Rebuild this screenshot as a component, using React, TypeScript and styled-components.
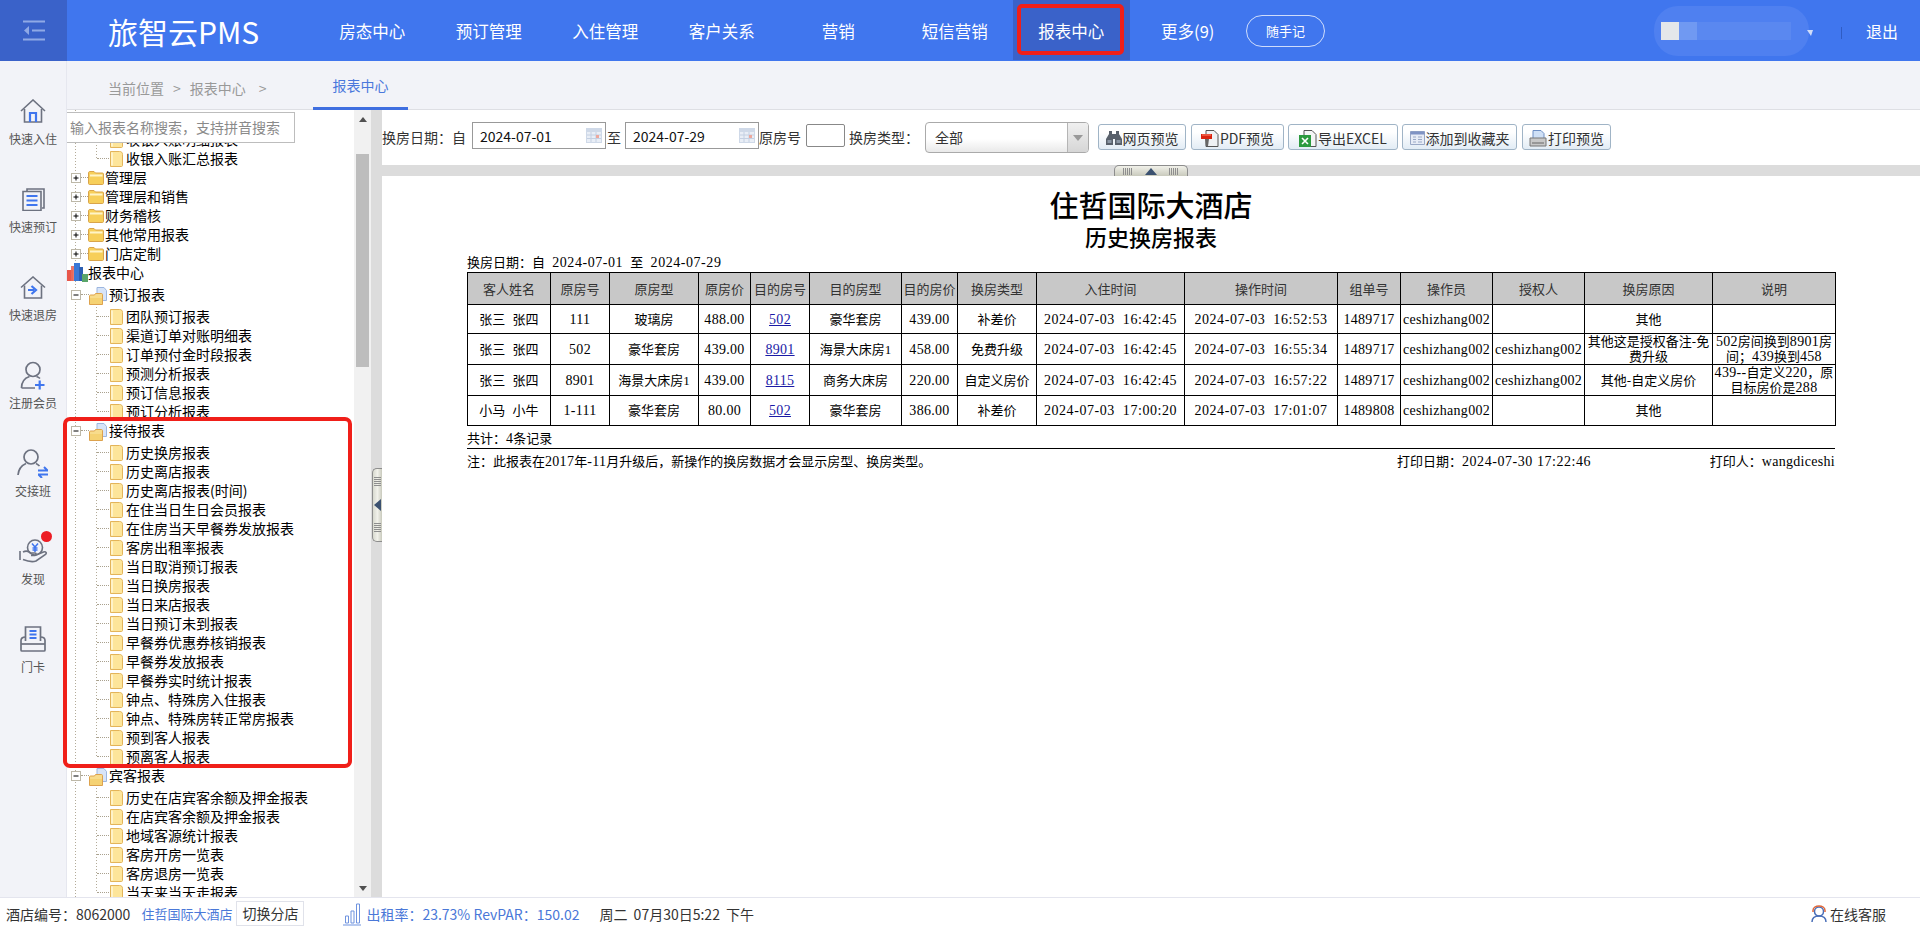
import React from 'react';
import styled, { createGlobalStyle } from 'styled-components';

const SANS = '"Noto Sans CJK SC", "Noto Sans", sans-serif';
const PRINT = '"Liberation Serif", "Noto Sans CJK SC", serif';
const BLUE = '#4076ee';
const DARK_BLUE = '#3a62c9';
const RED = '#f01f19';

const navItems = ['房态中心', '预订管理', '入住管理', '客户关系', '营销', '短信营销', '报表中心', '更多(9)'];

const reportRows = [
  { id: 1, guest: '张三 张四', from: '111', fromType: '玻璃房', price: '488.00', to: '502', toType: '豪华套房', toPrice: '439.00', kind: '补差价', checkin: '2024-07-03 16:42:45', done: '2024-07-03 16:52:53', group: '1489717', auth: '', reason: '其他', note: null, height: 29 },
  { id: 2, guest: '张三 张四', from: '502', fromType: '豪华套房', price: '439.00', to: '8901', toType: '海景大床房1', toPrice: '458.00', kind: '免费升级', checkin: '2024-07-03 16:42:45', done: '2024-07-03 16:55:34', group: '1489717', auth: 'ceshizhang002', reason: '其他这是授权备注-免费升级', note: 'a', height: 31 },
  { id: 3, guest: '张三 张四', from: '8901', fromType: '海景大床房1', price: '439.00', to: '8115', toType: '商务大床房', toPrice: '220.00', kind: '自定义房价', checkin: '2024-07-03 16:42:45', done: '2024-07-03 16:57:22', group: '1489717', auth: 'ceshizhang002', reason: '其他-自定义房价', note: 'b', height: 31 },
  { id: 4, guest: '小马 小牛', from: '1-111', fromType: '豪华套房', price: '80.00', to: '502', toType: '豪华套房', toPrice: '386.00', kind: '补差价', checkin: '2024-07-03 17:00:20', done: '2024-07-03 17:01:07', group: '1489808', auth: '', reason: '其他', note: null, height: 30 },
];

const columns = [83, 59, 89, 52, 59, 92, 56, 79, 148, 153, 63, 92, 92, 128, 123];
const heads = ['客人姓名', '原房号', '原房型', '原房价', '目的房号', '目的房型', '目的房价', '换房类型', '入住时间', '操作时间', '组单号', '操作员', '授权人', '换房原因', '说明'];

const App = () => (
  <>
    <GlobalStyle />
    <Page>
      <Header>
        <Toggle>
          <svg width="24" height="21" viewBox="0 0 24 21" fill="none" stroke="#8fa9e6" strokeWidth="2">
            <path d="M1 1.5h22M10 10.5h13M1 19.5h22" />
            <path d="M7 6l-5 4.5 5 4.5z" fill="#8fa9e6" stroke="none" />
          </svg>
        </Toggle>
        <Logo>旅智云PMS</Logo>
        <Nav>
          {navItems.map(item => (
            <NavItem key={item} $active={item === '报表中心'}>
              {item}
              {item === '报表中心' && <NavMark />}
            </NavItem>
          ))}
        </Nav>
        <NoteButton>随手记</NoteButton>
        <HeaderRight>
          <UserBlur>
            <BlurBand>
              <BlurCell $color="#e4e7ea" />
              <BlurCell $color="#7099f2" />
              <BlurCell $color="#5a88f0" $wide />
            </BlurBand>
          </UserBlur>
          <UserCaret />
          <HeaderDivider />
          <Logout>退出</Logout>
        </HeaderRight>
      </Header>

      <Main>
        <SideNav>
          <SideItem>
            <SideIcon>
              <svg width="26" height="24" viewBox="0 0 26 24" fill="none" stroke="#6d7280" strokeWidth="1.6">
                <path d="M1 12L13 1l12 11" />
                <path d="M4.5 10v13h17V10" />
                <path d="M10 23v-9h6v9" stroke={BLUE} strokeWidth="2.2" />
              </svg>
            </SideIcon>
            <SideLabel>快速入住</SideLabel>
          </SideItem>
          <SideItem>
            <SideIcon>
              <svg width="23" height="23" viewBox="0 0 23 23" fill="none" stroke="#6d7280" strokeWidth="1.6">
                <path d="M5 3V1h17v19h-2" />
                <path d="M1 3.5h18v19H1z" />
                <path d="M4.5 8h11M4.5 12.500h11M4.500 17h11" stroke={BLUE} strokeWidth="2" />
              </svg>
            </SideIcon>
            <SideLabel>快速预订</SideLabel>
          </SideItem>
          <SideItem>
            <SideIcon>
              <svg width="26" height="23" viewBox="0 0 26 23" fill="none" stroke="#6d7280" strokeWidth="1.6">
                <path d="M1 11.500L13 1l12 10.500" />
                <path d="M4.500 9.500V22h17V9.500" />
                <path d="M8 14h6M11.500 10l4.500 4-4.500 4" stroke={BLUE} strokeWidth="2.200" />
              </svg>
            </SideIcon>
            <SideLabel>快速退房</SideLabel>
          </SideItem>
          <SideItem>
            <SideIcon>
              <svg width="26" height="29" viewBox="0 0 26 29" fill="none" stroke="#6d7280" strokeWidth="1.7">
                <circle cx="13" cy="8.500" r="7" />
                <path d="M1.500 27c0-6 3.500-10 8-11.500M16.500 15.500c1.500.5 2.500 1 3.500 2M1.500 27H15" />
                <path d="M15 24h9.500M19.700 19.500v9" stroke={BLUE} strokeWidth="2.200" />
              </svg>
            </SideIcon>
            <SideLabel>注册会员</SideLabel>
          </SideItem>
          <SideItem>
            <SideIcon>
              <svg width="32" height="29" viewBox="0 0 32 29" fill="none" stroke="#6d7280" strokeWidth="1.700">
                <circle cx="14" cy="8" r="7" />
                <path d="M1 26c.5-6 3.500-9.500 8-11.500M19 14.500c1.500.7 2.500 1.500 3.500 2.500" />
                <path d="M21 21.500h10M27 18l3.500 3.500M31 25.500H21M25 29l-3.500-3.500" stroke={BLUE} strokeWidth="2" />
              </svg>
            </SideIcon>
            <SideLabel>交接班</SideLabel>
          </SideItem>
          <SideItem>
            <SideIcon>
              <svg width="29" height="24" viewBox="0 0 29 24" fill="none" stroke="#6d7280" strokeWidth="1.600">
                <circle cx="16" cy="8.500" r="7.500" />
                <path d="M1 12v9M4 13c3-1.500 5.500-1 8 1h4c1.500 0 1.500 2.500 0 2.500h-4M17 16l7.500-3c2.500-.8 3.500 1 2 2.500L17 22c-3 1-8 .5-13-1.500" />
                <path d="M13 4.500l3 3.500 3-3.500M16 8v5M13.500 9h5M13.500 11h5" stroke={BLUE} strokeWidth="1.500" />
              </svg>
              <Badge />
            </SideIcon>
            <SideLabel>发现</SideLabel>
          </SideItem>
          <SideItem>
            <SideIcon>
              <svg width="26" height="26" viewBox="0 0 26 26" fill="none" stroke="#6d7280" strokeWidth="1.700">
                <path d="M5.500 15V1h15v14" />
                <path d="M5.500 11C2.500 11 1 12.500 1 14.500V24c0 .8.500 1 1 1h22c.5 0 1-.2 1-1v-9.500c0-2-1.500-3.500-4.500-3.500" />
                <path d="M1 18h24" />
                <path d="M9.500 5h7M9.500 8.500h7M9.500 12h7" stroke={BLUE} strokeWidth="1.800" />
              </svg>
            </SideIcon>
            <SideLabel>门卡</SideLabel>
          </SideItem>
        </SideNav>

        <Content>
          <SubBar>
            <Crumbs>
              <span>当前位置</span>
              <CrumbArrow>&gt;</CrumbArrow>
              <span>报表中心</span>
              <CrumbArrow $wide>&gt;</CrumbArrow>
            </Crumbs>
            <ActiveTab>报表中心</ActiveTab>
          </SubBar>

          <Panels>
            <TreePane>
              <TreeBody>
                <Tree>
                  <Branch>
                    <Leaf label="收银入账明细报表" />
                    <Leaf label="收银入账汇总报表" />
                  </Branch>
                  <ClosedNode label="管理层" />
                  <ClosedNode label="管理层和销售" />
                  <ClosedNode label="财务稽核" />
                  <ClosedNode label="其他常用报表" />
                  <ClosedNode label="门店定制" />
                  <Row $high>
                    <ChartIcon />
                    <RowText>报表中心</RowText>
                  </Row>
                  <OpenNode label="预订报表" />
                  <Branch>
                    {['团队预订报表', '渠道订单对账明细表', '订单预付金时段报表', '预测分析报表', '预订信息报表', '预订分析报表'].map(l => (
                      <Leaf key={l} label={l} />
                    ))}
                  </Branch>
                  <OpenNode label="接待报表" />
                  <Branch>
                    {[
                      '历史换房报表', '历史离店报表', '历史离店报表(时间)', '在住当日生日会员报表', '在住房当天早餐券发放报表',
                      '客房出租率报表', '当日取消预订报表', '当日换房报表', '当日来店报表', '当日预订未到报表',
                      '早餐券优惠券核销报表', '早餐券发放报表', '早餐券实时统计报表', '钟点、特殊房入住报表',
                      '钟点、特殊房转正常房报表', '预到客人报表', '预离客人报表',
                    ].map(l => (
                      <Leaf key={l} label={l} />
                    ))}
                  </Branch>
                  <OpenNode label="宾客报表" />
                  <Branch>
                    {['历史在店宾客余额及押金报表', '在店宾客余额及押金报表', '地域客源统计报表', '客房开房一览表', '客房退房一览表', '当天来当天走报表'].map(l => (
                      <Leaf key={l} label={l} />
                    ))}
                  </Branch>
                </Tree>
              </TreeBody>
              <SearchBox>输入报表名称搜索&#xFF0C;支持拼音搜索</SearchBox>
              <ScrollTrack>
                <ScrollUp />
                <ScrollThumb />
                <ScrollDown />
              </ScrollTrack>
              <TreeMark />
            </TreePane>

            <SplitterV>
              <HandleV>
                <Grip $vertical />
                <ArrowLeft />
                <Grip $vertical />
              </HandleV>
            </SplitterV>

            <ReportPane>
              <Toolbar>
                <ToolLabel>换房日期&#xFF1A;自</ToolLabel>
                <DateBox $left={6}>
                  2024-07-01
                  <CalendarIcon />
                </DateBox>
                <ToolLabel $left={1}>至</ToolLabel>
                <DateBox $left={4}>
                  2024-07-29
                  <CalendarIcon />
                </DateBox>
                <ToolLabel>原房号</ToolLabel>
                <RoomBox />
                <ToolLabel $left={4}>换房类型&#xFF1A;</ToolLabel>
                <SelectBox>
                  <SelectText>全部</SelectText>
                  <SelectArrow />
                </SelectBox>
                <ToolButton $left={9} $width={88}>
                  <svg width="16" height="14" viewBox="0 0 16 14">
                    <path d="M3 0h3v3h4V0h3v3l3 5v6H9V8H7v6H0V8l3-5z" fill="#58606b" />
                    <path d="M1.500 9h4v3h-4zM10.500 9h4v3h-4z" fill="#8b97a5" />
                  </svg>
                  网页预览
                </ToolButton>
                <ToolButton $left={5} $width={93}>
                  <svg width="18" height="17" viewBox="0 0 18 17">
                    <path d="M5 .5h8l4 4v12H5z" fill="#eef1f4" stroke="#555" />
                    <path d="M0 4h11v5H0z" fill="#d9230f" />
                    <path d="M1 5h9" stroke="#ff8a70" />
                    <path d="M4 9l1 7h2l1-7z" fill="#666" />
                  </svg>
                  PDF预览
                </ToolButton>
                <ToolButton $left={4} $width={110}>
                  <svg width="18" height="17" viewBox="0 0 18 17">
                    <path d="M5 .5h8l4 4v12H5z" fill="#f4f5f6" stroke="#555" />
                    <path d="M0 5h12v12H0z" fill="#2b9a3e" />
                    <path d="M3 8l6 6M9 8l-6 6" stroke="#fff" strokeWidth="1.600" />
                  </svg>
                  导出EXCEL
                </ToolButton>
                <ToolButton $left={4} $width={115}>
                  <svg width="15" height="14" viewBox="0 0 15 14">
                    <path d="M.5.5h14v13H.500z" fill="#e7ecf6" stroke="#9aa9c6" />
                    <path d="M.5.5h14v3H.500z" fill="#7f93c4" />
                    <path d="M3 6h3M8 6h4M3 8.500h3M8 8.500h4M3 11h3M8 11h4" stroke="#9aa9c6" />
                  </svg>
                  添加到收藏夹
                </ToolButton>
                <ToolButton $left={5} $width={89}>
                  <svg width="18" height="17" viewBox="0 0 18 17">
                    <path d="M4 9V.5h8l3 3V9z" fill="#cfe0f6" stroke="#6e8fc4" />
                    <path d="M1 8h16v8H1z" fill="#c8c8c8" stroke="#777" />
                    <path d="M3 13h12" stroke="#666" />
                  </svg>
                  打印预览
                </ToolButton>
              </Toolbar>

              <SplitterH>
                <HandleH>
                  <Grip />
                  <ArrowUp />
                  <Grip />
                </HandleH>
              </SplitterH>

              <ReportBody>
                <HotelTitle>住哲国际大酒店</HotelTitle>
                <ReportTitle>历史换房报表</ReportTitle>
                <MetaLine>
                  换房日期&#xFF1A;自 <Stamp>2024-07-01</Stamp> 至 <Stamp>2024-07-29</Stamp>
                </MetaLine>
                <ReportTable>
                  <colgroup>
                    {columns.map((w, i) => (
                      <col key={i} width={w} />
                    ))}
                  </colgroup>
                  <thead>
                    <tr>
                      {heads.map(h => (
                        <HeadCell key={h}>{h}</HeadCell>
                      ))}
                    </tr>
                  </thead>
                  <tbody>
                    {reportRows.map(r => (
                      <BodyRow key={r.id} $height={r.height}>
                        <Cell>{r.guest}</Cell>
                        <Cell><Num>{r.from}</Num></Cell>
                        <Cell>{r.fromType}</Cell>
                        <Cell><Num>{r.price}</Num></Cell>
                        <Cell><RoomLink href="#">{r.to}</RoomLink></Cell>
                        <Cell>{r.toType}</Cell>
                        <Cell><Num>{r.toPrice}</Num></Cell>
                        <Cell>{r.kind}</Cell>
                        <Cell><Stamp>{r.checkin}</Stamp></Cell>
                        <Cell><Stamp>{r.done}</Stamp></Cell>
                        <Cell><Num>{r.group}</Num></Cell>
                        <Cell><Num>ceshizhang002</Num></Cell>
                        <Cell><Num>{r.auth}</Num></Cell>
                        <Cell>{r.reason}</Cell>
                        <Cell>
                          {r.note === 'a' && (
                            <>
                              <Num>502</Num>房间换到<Num>8901</Num>房间&#xFF1B;<Num>439</Num>换到<Num>458</Num>
                            </>
                          )}
                          {r.note === 'b' && (
                            <>
                              <Num>439--</Num>自定义<Num>220</Num>&#xFF0C;原目标房价是<Num>288</Num>
                            </>
                          )}
                        </Cell>
                      </BodyRow>
                    ))}
                  </tbody>
                </ReportTable>
                <TotalLine>
                  共计&#xFF1A;<Num>4</Num>条记录
                </TotalLine>
                <NoteLine>
                  <span>
                    注&#xFF1A;此报表在<Num>2017</Num>年<Num>-11</Num>月升级后&#xFF0C;新操作的换房数据才会显示房型、换房类型。
                  </span>
                  <span>
                    打印日期&#xFF1A;<Stamp>2024-07-30 17:22:46</Stamp>
                  </span>
                  <PrintedBy>
                    打印人&#xFF1A;<Num>wangdiceshi</Num>
                  </PrintedBy>
                </NoteLine>
              </ReportBody>
            </ReportPane>
          </Panels>
        </Content>
      </Main>

      <Footer>
        <FootText>酒店编号&#xFF1A;8062000</FootText>
        <HotelLink>住哲国际大酒店</HotelLink>
        <SwitchButton>切换分店</SwitchButton>
        <BarIcon viewBox="0 0 18 24" width="18" height="24">
          <path d="M2.500 14h3v7h-3zM8 9h3v12H8zM13.500 2h3v19h-3z" fill="none" stroke="#6f93df" />
          <path d="M0 23h18" stroke="#6f93df" />
        </BarIcon>
        <RateText>出租率&#xFF1A;23.73% RevPAR&#xFF1A;150.02</RateText>
        <FootText $left={20} $spaced>周二 07月30日5:22 下午</FootText>
        <Service>
          <svg width="18" height="18" viewBox="0 0 18 18" fill="none" stroke="#4a6fb8" strokeWidth="1.500">
            <circle cx="9" cy="6.500" r="4.500" />
            <path d="M2 17c0-4 3-6 7-6s7 2 7 6" />
            <path d="M3 7V5.500C3 2.500 6 1 9 1s6 1.500 6 4.500V7" stroke="#e0683a" />
          </svg>
          在线客服
        </Service>
      </Footer>
    </Page>
  </>
);

export default App;

const FileGlyph = () => (
  <DocIcon width="13" height="16" viewBox="0 0 13 16">
    <path d="M.5.500h9c2 0 3 1 3 3v11c0 .5-.5 1-1 1H.500z" fill="#fde59a" stroke="#e3b45a" />
    <path d="M2 1.500v13" stroke="#fff3c8" strokeWidth="2" />
  </DocIcon>
);

const Leaf = ({ label }: { label: string }) => (
  <Row $indent={30}>
    <Dash $width={12} />
    <FileGlyph />
    <RowText $left={3}>{label}</RowText>
  </Row>
);

const ToggleBox = ({ open }: { open?: boolean }) => (
  <BoxIcon width="10" height="10" viewBox="0 0 10 10">
    <rect x=".5" y=".5" width="9" height="9" fill="#fff" stroke="#bdb8a8" />
    <path d={open ? 'M2.500 5h5' : 'M2.500 5h5M5 2.500v5'} stroke="#000" />
  </BoxIcon>
);

const ClosedNode = ({ label }: { label: string }) => (
  <Row $indent={4}>
    <ToggleBox />
    <Dash $width={7} />
    <svg width="16" height="14" viewBox="0 0 16 14">
      <path d="M.5 2c0-1 .5-1.500 1.500-1.500h4l1.500 1.500h7c.5 0 1 .5 1 1v9.500c0 .5-.5 1-1 1h-13c-.5 0-1-.5-1-1z" fill="#f7cf5a" stroke="#d9a44a" />
      <path d="M2 3.500h12.500v2H2z" fill="#fff4c8" />
    </svg>
    <RowText $left={1}>{label}</RowText>
  </Row>
);

const OpenNode = ({ label }: { label: string }) => (
  <Row $high $indent={4}>
    <ToggleBox open />
    <Dash $width={8} />
    <OpenFolder width="18" height="18" viewBox="0 0 18 18">
      <path d="M8 .5h7l2.500 3v10H8z" fill="#d7e4f8" stroke="#9db6df" />
      <path d="M.5 9c0-.5.5-1 1-1h4l1-1.500h6c.5 0 1 .5 1 1V17.500h-13z" fill="#f8dc8c" stroke="#dda24d" />
      <path d="M1 11h12v6H1z" fill="#f5d273" />
    </OpenFolder>
    <RowText $left={2}>{label}</RowText>
  </Row>
);

const ChartIcon = () => (
  <svg width="21" height="19" viewBox="0 0 21 19">
    <path d="M0 7h6v11H0z" fill="#e8564a" />
    <path d="M4 3h5v15H4z" fill="#e86a5c" opacity=".9" />
    <path d="M7 0h6v18H7z" fill="#3a78d6" />
    <path d="M12 4h4v14h-4z" fill="#2c5fb2" />
    <path d="M15 11h6v8h-6z" fill="#5aa56a" />
  </svg>
);

const CalendarIcon = () => (
  <CalendarSvg width="16" height="15" viewBox="0 0 16 15">
    <path d="M0 0h16v15H0z" fill="#cfd9e8" />
    <path d="M1 4h14v10H1z" fill="#e9eef6" />
    <path d="M1 7h14M1 10.500h14M5 4v10M10 4v10" stroke="#c4d0e2" />
    <path d="M10 7h3v3h-3z" fill="#eda79c" />
  </CalendarSvg>
);

const GlobalStyle = createGlobalStyle`
  html, body {
    margin: 0;
    padding: 0;
    height: 100%;
    background: #fff;
    font-family: ${SANS};
  }
  * {
    box-sizing: border-box;
  }
`;

const Page = styled.div`
  display: flex;
  flex-direction: column;
  width: 1920px;
  height: 929px;
  overflow: hidden;
`;

const Header = styled.header`
  display: flex;
  flex-shrink: 0;
  height: 61px;
  background: ${BLUE};
  color: #fff;
`;

const Toggle = styled.div`
  display: flex;
  justify-content: center;
  align-items: center;
  width: 67px;
  background: ${DARK_BLUE};
`;

const Logo = styled.div`
  width: 247px;
  padding-left: 41px;
  font-size: 30px;
  line-height: 63px;
  white-space: nowrap;
`;

const Nav = styled.nav`
  display: flex;
`;

const NavItem = styled.div<{ $active?: boolean }>`
  position: relative;
  width: 116.5px;
  height: 60px;
  font-size: 16.5px;
  line-height: 62px;
  text-align: center;
  background: ${({ $active }) => ($active ? DARK_BLUE : 'transparent')};
`;

const NavMark = styled.span`
  position: absolute;
  top: 4px;
  left: 4px;
  width: 107px;
  height: 51px;
  border: 4px solid ${RED};
  border-radius: 5px;
`;

const NoteButton = styled.div`
  align-self: flex-start;
  width: 79px;
  height: 32px;
  margin-top: 15px;
  border: 1px solid rgba(255, 255, 255, 0.75);
  border-radius: 16px;
  font-size: 13px;
  line-height: 30px;
  text-align: center;
`;

const HeaderRight = styled.div`
  display: flex;
  align-items: center;
  margin-left: auto;
  padding-right: 22px;
`;

const UserBlur = styled.div`
  display: flex;
  align-items: center;
  width: 155px;
  height: 50px;
  padding-left: 7px;
  border-radius: 24px;
  background: #4f80f0;
`;

const BlurBand = styled.div`
  display: flex;
  width: 130px;
  height: 18px;
`;

const BlurCell = styled.span<{ $color: string; $wide?: boolean }>`
  flex: ${({ $wide }) => ($wide ? 1 : '0 0 18px')};
  background: ${({ $color }) => $color};
`;

const UserCaret = styled.span`
  width: 0;
  height: 0;
  margin: 4px 0 0 -2px;
  border-top: 6px solid #cfdcf8;
  border-left: 4px solid transparent;
  border-right: 2px solid transparent;
`;

const HeaderDivider = styled.span`
  width: 1px;
  height: 12px;
  margin: 4px 24px 0 28px;
  background: #2f5cc4;
`;

const Logout = styled.span`
  font-size: 16px;
  line-height: 62px;
`;

const Main = styled.div`
  display: flex;
  flex: 1;
  min-height: 0;
`;

const SideNav = styled.aside`
  flex-shrink: 0;
  width: 67px;
  padding-top: 29px;
  background: #f2f3f8;
  border-right: 1px solid #e6e7ef;
`;

const SideItem = styled.div`
  display: flex;
  flex-direction: column;
  align-items: center;
  height: 88px;
  padding-top: 6px;
`;

const SideIcon = styled.div`
  position: relative;
  display: flex;
  justify-content: center;
  align-items: center;
  height: 30px;
`;

const Badge = styled.span`
  position: absolute;
  top: -5px;
  right: -4px;
  width: 11px;
  height: 11px;
  border-radius: 50%;
  background: #ec1c24;
`;

const SideLabel = styled.div`
  margin-top: 5px;
  color: #555;
  font-size: 12px;
  line-height: 16px;
  white-space: nowrap;
`;

const Content = styled.div`
  display: flex;
  flex: 1;
  flex-direction: column;
  min-width: 0;
`;

const SubBar = styled.div`
  display: flex;
  flex-shrink: 0;
  height: 49px;
  background: #f2f3f8;
  border-bottom: 1px solid #dedfe4;
`;

const Crumbs = styled.div`
  display: flex;
  align-items: center;
  width: 246px;
  padding: 5px 0 0 41px;
  color: #999;
  font-size: 14px;
`;

const CrumbArrow = styled.span<{ $wide?: boolean }>`
  margin: ${({ $wide }) => ($wide ? '0 0 0 13px' : '0 9px')};
`;

const ActiveTab = styled.div`
  width: 95px;
  height: 49px;
  border-bottom: 3px solid #3f6fe0;
  color: #4a78dc;
  font-size: 14px;
  line-height: 48px;
  text-align: center;
`;

const Panels = styled.div`
  display: flex;
  flex: 1;
  min-height: 0;
`;

const TreePane = styled.div`
  position: relative;
  display: flex;
  flex-shrink: 0;
  width: 304px;
`;

const TreeBody = styled.div`
  flex: 1;
  min-width: 0;
  overflow: hidden;
`;

const Tree = styled.div`
  padding-top: 20px;
  background: repeating-linear-gradient(to bottom, #b3ab98 0 1px, transparent 1px 3px) 8px 0 / 1px 100% no-repeat;
`;

const Branch = styled.div`
  background: repeating-linear-gradient(to bottom, #b3ab98 0 1px, transparent 1px 3px) 29px 0 / 1px calc(100% - 9px) no-repeat;
`;

const Row = styled.div<{ $high?: boolean; $indent?: number }>`
  display: flex;
  align-items: center;
  height: ${({ $high }) => ($high ? 22 : 19)}px;
  padding-left: ${({ $indent }) => $indent ?? 0}px;
  padding-bottom: ${({ $high }) => ($high ? 3 : 0)}px;
  white-space: nowrap;
`;

const RowText = styled.span<{ $left?: number }>`
  margin-left: ${({ $left }) => $left ?? 0}px;
  color: #000;
  font-size: 14px;
  line-height: 19px;
`;

const Dash = styled.span<{ $width: number }>`
  flex-shrink: 0;
  width: ${({ $width }) => $width}px;
  border-top: 1px dotted #a9a18e;
`;

const DocIcon = styled.svg`
  flex-shrink: 0;
  margin-left: 1px;
`;

const BoxIcon = styled.svg`
  flex-shrink: 0;
`;

const OpenFolder = styled.svg`
  flex-shrink: 0;
  margin-bottom: -3px;
`;

const SearchBox = styled.div`
  position: absolute;
  top: 2px;
  left: 0;
  width: 228px;
  height: 31px;
  padding-left: 3px;
  background: #fff;
  border: 1px solid #bdbdbd;
  border-left: 0;
  color: #8a8a8a;
  font-size: 14px;
  line-height: 29px;
  white-space: nowrap;
`;

const TreeMark = styled.span`
  position: absolute;
  top: 307px;
  left: -4px;
  width: 289px;
  height: 351px;
  border: 4px solid ${RED};
  border-radius: 7px;
`;

const ScrollTrack = styled.div`
  display: flex;
  flex-direction: column;
  align-items: center;
  flex-shrink: 0;
  width: 17px;
  background: #f1f1f1;
`;

const ScrollThumb = styled.div`
  width: 13px;
  height: 213px;
  margin-top: 32px;
  margin-bottom: auto;
  background: #bdbdbd;
`;

const ScrollUp = styled.span`
  flex-shrink: 0;
  width: 0;
  height: 0;
  margin-top: 7px;
  border-left: 4px solid transparent;
  border-right: 4px solid transparent;
  border-bottom: 5px solid #505050;
`;

const ScrollDown = styled.span`
  width: 0;
  height: 0;
  margin-bottom: 6px;
  border-left: 4px solid transparent;
  border-right: 4px solid transparent;
  border-top: 5px solid #505050;
`;

const SplitterV = styled.div`
  display: flex;
  justify-content: flex-end;
  align-items: center;
  flex-shrink: 0;
  width: 11px;
  padding-top: 3px;
  background: #dcdcdc;
`;

const HandleV = styled.div`
  display: flex;
  flex-direction: column;
  justify-content: space-between;
  align-items: center;
  width: 10px;
  height: 74px;
  padding: 8px 0;
  background: linear-gradient(to right, #d8d9cf, #f1f1ea 50%, #c9cabd);
  border: 1px solid #8d8d8d;
  border-right: 0;
  border-radius: 5px 0 0 5px;
`;

const Grip = styled.span<{ $vertical?: boolean }>`
  width: ${({ $vertical }) => ($vertical ? '7px' : '10px')};
  height: ${({ $vertical }) => ($vertical ? '10px' : '7px')};
  background: repeating-linear-gradient(
    ${({ $vertical }) => ($vertical ? 'to bottom' : 'to right')},
    #8e8e8e 0 1px,
    transparent 1px 2px
  );
`;

const ArrowLeft = styled.span`
  width: 0;
  height: 0;
  border-top: 6px solid transparent;
  border-bottom: 6px solid transparent;
  border-right: 7px solid #3b5170;
`;

const ReportPane = styled.div`
  display: flex;
  flex: 1;
  flex-direction: column;
  min-width: 0;
`;

const Toolbar = styled.div`
  display: flex;
  align-items: flex-start;
  flex-shrink: 0;
  height: 55px;
  padding-top: 12px;
  color: #333;
  font-size: 14px;
  white-space: nowrap;
`;

const ToolLabel = styled.span<{ $left?: number }>`
  margin-left: ${({ $left }) => $left ?? 0}px;
  line-height: 30px;
`;

const DateBox = styled.div<{ $left: number }>`
  display: flex;
  align-items: center;
  justify-content: space-between;
  width: 134px;
  height: 27px;
  margin-left: ${({ $left }) => $left}px;
  padding: 0 3px 0 7px;
  border: 1px solid #999;
  color: #111;
`;

const CalendarSvg = styled.svg`
  flex-shrink: 0;
`;

const RoomBox = styled.div`
  width: 39px;
  height: 23px;
  margin: 2px 0 0 5px;
  border: 1px solid #888;
  border-radius: 2px;
`;

const SelectBox = styled.div`
  display: flex;
  width: 164px;
  height: 31px;
  margin-left: 6px;
  overflow: hidden;
  background: linear-gradient(to bottom, #fff 55%, #e9e9e9);
  border: 1px solid #aaa;
  border-radius: 4px;
`;

const SelectText = styled.span`
  flex: 1;
  padding-left: 9px;
  line-height: 28px;
`;

const SelectArrow = styled.span`
  position: relative;
  width: 21px;
  background: linear-gradient(to bottom, #f0f0f0, #d6d6d6);
  border-left: 1px solid #b5b5b5;

  &::after {
    content: '';
    position: absolute;
    top: 12px;
    left: 5px;
    border-left: 5px solid transparent;
    border-right: 5px solid transparent;
    border-top: 6px solid #999;
  }
`;

const ToolButton = styled.div<{ $left: number; $width: number }>`
  display: flex;
  align-items: center;
  justify-content: center;
  gap: 1px;
  width: ${({ $width }) => $width}px;
  height: 26px;
  margin: 2px 0 0 ${({ $left }) => $left}px;
  padding-top: 2px;
  background: linear-gradient(to bottom, #fff 30%, #e2ecf5);
  border: 1px solid #a0b4c6;
  border-radius: 3px;
  color: #333;
  font-size: 14px;
`;

const SplitterH = styled.div`
  display: flex;
  justify-content: center;
  flex-shrink: 0;
  height: 11px;
  background: #dcdcdc;
`;

const HandleH = styled.div`
  display: flex;
  justify-content: space-between;
  align-items: center;
  width: 74px;
  height: 11px;
  padding: 0 8px;
  background: linear-gradient(to bottom, #f1f1ea, #c9cabd);
  border: 1px solid #8d8d8d;
  border-bottom: 0;
  border-radius: 5px 5px 0 0;
`;

const ArrowUp = styled.span`
  width: 0;
  height: 0;
  border-left: 6px solid transparent;
  border-right: 6px solid transparent;
  border-bottom: 7px solid #3b5170;
`;

const ReportBody = styled.main`
  flex: 1;
  width: 1368px;
  margin-left: 85px;
  padding-top: 12px;
  color: #000;
  font-family: ${PRINT};
  font-size: 13px;
`;

const HotelTitle = styled.h1`
  margin: 0;
  font-size: 29px;
  font-weight: 500;
  line-height: 38px;
  text-align: center;
`;

const ReportTitle = styled.h2`
  margin: 0;
  font-size: 22px;
  font-weight: 500;
  line-height: 26px;
  text-align: center;
`;

const MetaLine = styled.div`
  height: 20px;
  padding-top: 1px;
  line-height: 20px;
  word-spacing: 4px;
`;

const ReportTable = styled.table`
  width: 1368px;
  border-collapse: collapse;
  table-layout: fixed;
`;

const HeadCell = styled.th`
  height: 32px;
  padding: 0;
  background: #c8c8c8;
  border: 1px solid #000;
  color: #333;
  font-weight: 400;
  text-align: center;
`;

const BodyRow = styled.tr<{ $height: number }>`
  height: ${({ $height }) => $height}px;
`;

const Cell = styled.td`
  padding: 0;
  border: 1px solid #000;
  line-height: 15px;
  text-align: center;
  word-spacing: 4px;
`;

const Num = styled.span`
  font-family: "Liberation Serif", serif;
  font-size: 14px;
  letter-spacing: 0.3px;
`;

const Stamp = styled(Num)`
  letter-spacing: 0.55px;
`;

const RoomLink = styled.a`
  color: #1a1aa6;
  font-family: "Liberation Serif", serif;
  font-size: 14px;
  letter-spacing: 0.3px;
`;

const TotalLine = styled.div`
  height: 23px;
  padding-top: 4px;
  line-height: 18px;
  border-bottom: 1px solid #000;
`;

const NoteLine = styled.div`
  display: grid;
  grid-template-columns: 930px 309px 1fr;
  padding-top: 4px;
  line-height: 18px;
`;

const PrintedBy = styled.span`
  text-align: right;
`;

const Footer = styled.footer`
  display: flex;
  align-items: center;
  flex-shrink: 0;
  height: 32px;
  padding-left: 6px;
  background: #fff;
  border-top: 1px solid #e4e5ee;
  font-size: 14px;
`;

const FootText = styled.span<{ $left?: number; $spaced?: boolean }>`
  margin-left: ${({ $left }) => $left ?? 0}px;
  color: #333;
  word-spacing: ${({ $spaced }) => ($spaced ? 3 : 0)}px;
`;

const HotelLink = styled.span`
  width: 102px;
  padding-left: 11px;
  color: #4a78d8;
  font-size: 13px;
  white-space: nowrap;
`;

const RateText = styled.span`
  margin-left: 5px;
  color: #4a78d8;
`;

const SwitchButton = styled.div`
  width: 68px;
  height: 25px;
  margin-left: 4px;
  border: 1px solid #e0e2ea;
  color: #333;
  line-height: 22px;
  text-align: center;
`;

const BarIcon = styled.svg`
  margin-left: 39px;
`;

const Service = styled.div`
  display: flex;
  align-items: center;
  gap: 2px;
  margin-left: auto;
  padding-right: 34px;
  color: #333;
`;
